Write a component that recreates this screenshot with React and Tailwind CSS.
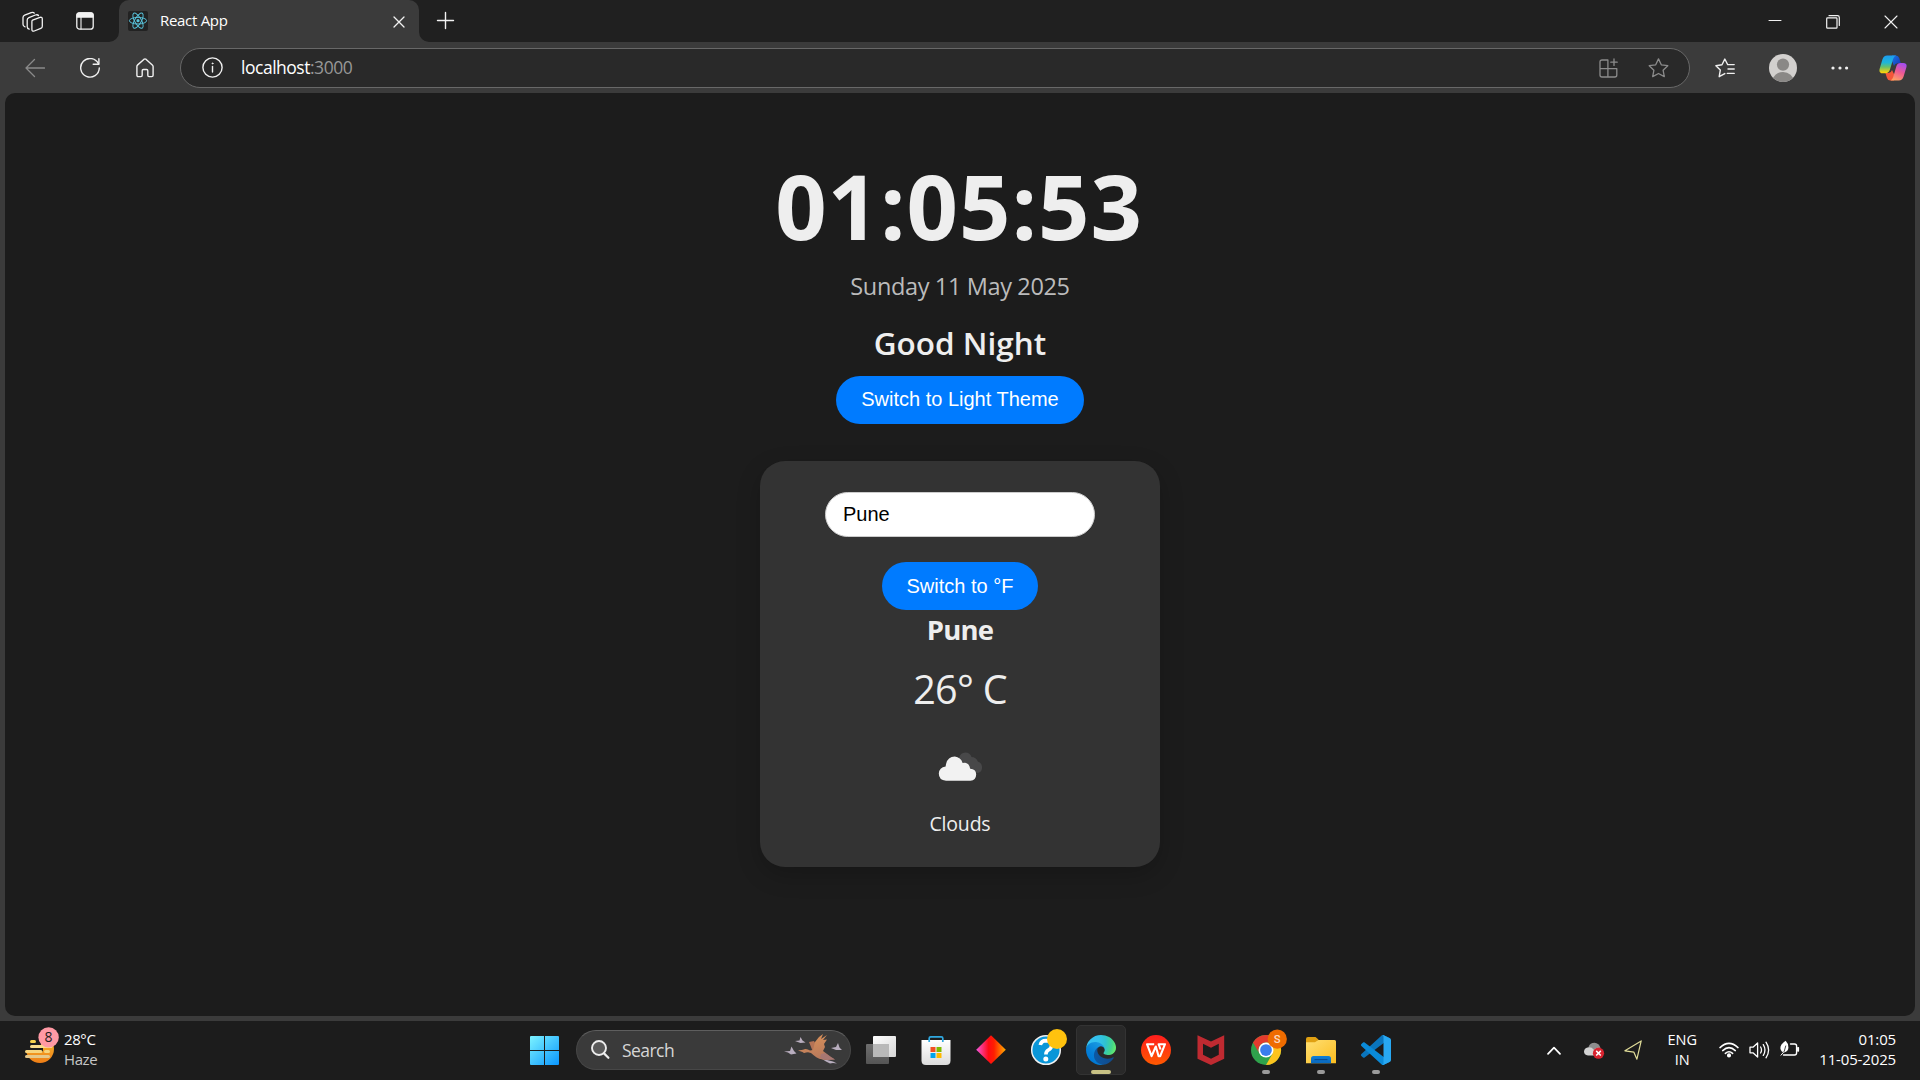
import React from "react";

const UI = "font-['Open_Sans','Noto_Sans',sans-serif]";
const ARIAL = "font-['Liberation_Sans',Arial,sans-serif]";

function Line({ className, children, w = 20, h = 20, sw = 1.3 }) {
  return (
    <svg
      className={`block shrink-0 ${className}`}
      width={w}
      height={h}
      viewBox={`0 0 ${w} ${h}`}
      fill="none"
      stroke="currentColor"
      strokeWidth={sw}
      strokeLinecap="round"
      strokeLinejoin="round"
    >
      {children}
    </svg>
  );
}

function ReactLogo() {
  return (
    <svg className="block h-5 w-5 shrink-0 rounded-[2px] bg-[#222222]" viewBox="0 0 20 20" fill="none" stroke="#58c4dc" strokeWidth="0.95">
      <ellipse cx="10" cy="9.7" rx="8.6" ry="3.3" />
      <ellipse cx="10" cy="9.7" rx="8.6" ry="3.3" transform="rotate(60 10 9.7)" />
      <ellipse cx="10" cy="9.7" rx="8.6" ry="3.3" transform="rotate(120 10 9.7)" />
      <circle cx="10" cy="9.7" r="1.6" fill="#58c4dc" stroke="none" />
    </svg>
  );
}

function TabStrip() {
  return (
    <div className="flex h-[42px] shrink-0 items-start bg-[#202020] text-[#f2f2f2]">
      <Line className="ml-[22px] mt-[11px]" w={22} h={22}>
        <path d="M10.6 9.2 L18 6.4 Q20.3 5.8 20.3 8 V15.2 Q20.3 16.8 18.8 17.4 L12.3 20 Q9.9 20.7 9.9 18.4 V10.6 Q9.9 9.5 10.6 9.2Z" />
        <path d="M7.2 18.2 Q5.2 17.8 5.2 15.6 V9 Q5.2 7.3 6.9 6.6 L13.4 4 Q15.6 3.3 16.5 4.5" />
        <path d="M3 15.8 Q1 15.4 1 13.2 V6.6 Q1 4.9 2.7 4.2 L9.2 1.6 Q11.4 0.9 12.3 2.1" />
      </Line>
      <Line className="ml-[32px] mt-[12px]" w={18} h={18}>
        <rect x="0.8" y="0.8" width="16.4" height="16.4" rx="2.8" />
        <path d="M1 5 V3 Q1 1 3 1 H15 Q17 1 17 3 V5Z" fill="currentColor" />
        <path d="M5 5 V17" strokeWidth="1.1" />
      </Line>
      <div className="relative ml-[25px] flex h-[42px] w-[300px] items-start rounded-t-[10px] bg-[#3b3b3b]">
        <svg className="absolute -left-[10px] bottom-0 h-[10px] w-[10px]" viewBox="0 0 10 10" fill="#3b3b3b">
          <path d="M10 0 A10 10 0 0 1 0 10 H10Z" />
        </svg>
        <svg className="absolute -right-[10px] bottom-0 h-[10px] w-[10px]" viewBox="0 0 10 10" fill="#3b3b3b">
          <path d="M0 0 A10 10 0 0 0 10 10 H0Z" />
        </svg>
        <div className="ml-[9px] mt-[11px]"><ReactLogo /></div>
        <span className="ml-[12px] mt-[10px] text-[15px] leading-[21px] tracking-[-0.3px] text-white">React App</span>
        <Line className="ml-auto mr-[14px] mt-[16px]" w={12} h={12}>
          <path d="M1 1 L11 11 M11 1 L1 11" />
        </Line>
      </div>
      <Line className="ml-[17px] mt-[11px]" w={19} h={19} sw={1.4}>
        <path d="M9.5 1.5 V17.5 M1.5 9.5 H17.5" />
      </Line>
      <div className="ml-auto flex items-start">
        <Line className="mr-[44px] mt-[14px]" w={14} h={14} sw={1}>
          <path d="M1 6.5 H13" />
        </Line>
        <Line className="mr-[44px] mt-[15px]" w={14} h={14} sw={1.2}>
          <rect x="0.7" y="2.9" width="10.3" height="10.3" rx="0.8" />
          <path d="M3 0.7 H11.5 Q13.3 0.7 13.3 2.5 V10.5" />
        </Line>
        <Line className="mr-[22px] mt-[15px]" w={14} h={14} sw={1.1}>
          <path d="M1 1 L13 13 M13 1 L1 13" />
        </Line>
      </div>
    </div>
  );
}

function Copilot() {
  return (
    <svg className="ml-[30px] block shrink-0" width="28" height="26" viewBox="0 0 28 26">
      <defs>
        <linearGradient id="cpA" x1="0" y1="0" x2="0" y2="1">
          <stop offset="0" stopColor="#1c9cf0" />
          <stop offset="0.4" stopColor="#1eb6d8" />
          <stop offset="0.65" stopColor="#68c06a" />
          <stop offset="0.95" stopColor="#f6d20e" />
        </linearGradient>
        <linearGradient id="cpB" x1="0.7" y1="0" x2="0.3" y2="1">
          <stop offset="0" stopColor="#a44df0" />
          <stop offset="0.5" stopColor="#ef5a92" />
          <stop offset="1" stopColor="#ffa264" />
        </linearGradient>
        <linearGradient id="cpC" x1="0" y1="0" x2="1" y2="1">
          <stop offset="0" stopColor="#1b73e0" />
          <stop offset="1" stopColor="#1636b8" />
        </linearGradient>
      </defs>
      <path d="M13 0.5 H16.8 Q19.4 0.5 20.2 3 L21.8 8.3 H18.5 Q16 8.3 15 11 L13 6Z" fill="url(#cpC)" />
      <path d="M15 25.5 H11.4 Q8.8 25.5 8 23 L6.4 18 H9.6 Q12 18 13 15 L15.5 20Z" fill="#f4573a" />
      <path d="M8.2 0.5 H17.2 Q15 1 14.1 4 L11 14.6 Q9.9 18.2 6.5 18.2 H3.8 Q-0.3 18.2 0.6 14 L3.4 4.5 Q4.6 0.5 8.2 0.5Z" fill="url(#cpA)" />
      <path d="M19.8 25.5 H11.5 Q13.4 24.8 14.2 22 L17.3 11.4 Q18.3 8 21.6 8 H24.2 Q28.4 8 27.4 12.2 L24.6 21.6 Q23.4 25.5 19.8 25.5Z" fill="url(#cpB)" />
    </svg>
  );
}

function Toolbar() {
  return (
    <div className="flex h-[51px] shrink-0 items-center bg-[#3b3b3b] text-[#f0f0f0]">
      <Line className="ml-[25px] text-[#8a8a8a]" w={20} h={20}>
        <path d="M1 10 H19.5 M9.5 1.5 L1 10 L9.5 18.5" />
      </Line>
      <Line className="ml-[35px]" w={20} h={20} sw={1.4}>
        <path d="M18.5 6 A9.3 9.3 0 1 0 19.3 10" />
        <path d="M18.9 0.8 V6.2 H13.2" />
      </Line>
      <Line className="ml-[36px]" w={18} h={20} sw={1.4}>
        <path d="M0.9 8.6 Q0.9 7.6 1.7 6.9 L7.8 1.4 Q9 0.4 10.2 1.4 L16.3 6.9 Q17.1 7.6 17.1 8.6 V17.3 Q17.1 18.6 15.8 18.6 H13 Q11.8 18.6 11.8 17.3 V12.7 Q11.8 11.5 10.6 11.5 H7.4 Q6.2 11.5 6.2 12.7 V17.3 Q6.2 18.6 5 18.6 H2.2 Q0.9 18.6 0.9 17.3Z" />
      </Line>
      <div className="ml-[26px] flex h-10 w-[1510px] items-center rounded-full border border-[#686868] bg-[#292929]">
        <Line className="ml-[21px]" w={21} h={21} sw={1.4}>
          <circle cx="10.5" cy="10.5" r="9.6" />
          <path d="M10.5 9.4 V15" />
          <circle cx="10.5" cy="6.4" r="0.5" fill="currentColor" strokeWidth="0.9" />
        </Line>
        <span className="mb-[2px] ml-[18px] text-[17.5px] leading-6 tracking-[-0.48px] text-white">
          localhost<span className="text-[#979797]">:3000</span>
        </span>
        <Line className="ml-auto text-[#8b8b8b]" w={20} h={20}>
          <path d="M8.9 2 H3 Q1 2 1 4 V17 Q1 19 3 19 H15.8 Q17.8 19 17.8 17 V10.6 H1 M8.9 2 V19" />
          <path d="M15 1 V7.4 M11.8 4.2 H18.2" />
        </Line>
        <Line className="ml-[29px] mr-[20px] text-[#8b8b8b]" w={21} h={20}>
          <path d="M10.5 0.9 L13.3 6.8 L19.8 7.7 L15.1 12.2 L16.3 18.6 L10.5 15.5 L4.7 18.6 L5.9 12.2 L1.2 7.7 L7.7 6.8Z" />
        </Line>
      </div>
      <Line className="ml-[25px]" w={20} h={20} sw={1.4}>
        <path d="M12.6 6.5 L9.8 1 L7 6.8 L0.9 7.7 L5.3 12.1 L4.2 18.7 L9.8 15.6" />
        <path d="M12.8 6.6 H19.2 M13 11 H19.2 M12.3 15.4 H19.2" />
      </Line>
      <svg className="ml-[34px] block shrink-0" width="28" height="28" viewBox="0 0 28 28">
        <defs><clipPath id="avatar"><circle cx="14" cy="14" r="14" /></clipPath></defs>
        <g clipPath="url(#avatar)">
          <rect width="28" height="28" fill="#d2d0ce" />
          <circle cx="14" cy="10.6" r="6.1" fill="#8a8886" />
          <ellipse cx="14" cy="27" rx="10.6" ry="9" fill="#8a8886" />
        </g>
      </svg>
      <svg className="ml-[34px] block shrink-0" width="18" height="4" viewBox="0 0 18 4" fill="#f0f0f0">
        <circle cx="2" cy="2" r="1.6" /><circle cx="9" cy="2" r="1.6" /><circle cx="15.6" cy="2" r="1.6" />
      </svg>
      <Copilot />
    </div>
  );
}

function CloudIcon() {
  return (
    <svg className="block" width="100" height="100" viewBox="0 0 100 100">
      <path d="M49 45 Q50 40 55.5 39.6 Q60 39.8 61.5 44 Q66 44 67.8 48.5 Q72.5 50 72 55.5 Q71.5 59 68 60 L54 56Z" fill="#484849" />
      <path d="M36 67.8 Q28.8 67.2 28.8 60.5 Q29.2 54.6 35.6 53.6 Q36.6 43.8 44.8 43.6 Q50.8 44.2 52.6 50 Q59 48.6 60.2 55.8 Q66 56 66.2 61.5 Q66 67.2 60.4 67.8Z" fill="#f2f2f2" />
    </svg>
  );
}

function Page() {
  return (
    <main className="mx-[5px] flex h-[923px] flex-col items-center overflow-hidden rounded-[10px] bg-[#1c1c1c] text-[#eeeeee]">
      <h1 className="mr-[2px] mt-[52px] text-[90px] font-bold leading-[120px] tracking-[0.95px]">01:05:53</h1>
      <p className="mt-[5px] text-[23.5px] leading-8 tracking-[-0.36px] text-[#bbbbbb]">Sunday 11 May 2025</p>
      <h2 className="mt-[19px] text-[31.5px] font-semibold leading-[44px]">Good Night</h2>
      <button className={`mt-[11px] h-12 rounded-[25px] bg-[#007bff] px-[25px] pb-[2px] text-[20px] text-white ${ARIAL}`}>
        Switch to Light Theme
      </button>
      <section className="mt-[37px] flex h-[406px] w-[400px] flex-col items-center rounded-[25px] bg-[#333333] shadow-[0_8px_24px_rgba(0,0,0,0.2)]">
        <input
          className={`mt-[31px] h-[45px] w-[270px] rounded-[25px] border border-[#cccccc] bg-white px-[17px] text-[20px] text-black outline-none ${ARIAL}`}
          defaultValue="Pune"
        />
        <button className={`mt-[25px] h-12 w-[156px] rounded-[25px] bg-[#007bff] text-[20px] text-white ${ARIAL}`}>
          Switch to °F
        </button>
        <h3 className="mt-px text-[27.5px] font-bold leading-[38px] tracking-[-0.75px]">Pune</h3>
        <p className="mt-[14px] text-[39.5px] leading-[52px] tracking-[-0.7px]">26° C</p>
        <div className="mt-[-2px] h-[100px]"><CloudIcon /></div>
        <p className="mt-[-2px] text-[19.5px] leading-[26px] tracking-[-0.2px]">Clouds</p>
      </section>
    </main>
  );
}

function HazeIcon() {
  return (
    <svg className="block shrink-0" width="36" height="38" viewBox="0 0 36 38">
      <defs>
        <linearGradient id="sun" x1="0" y1="0" x2="0" y2="1">
          <stop offset="0" stopColor="#f8c433" /><stop offset="1" stopColor="#ee7d16" />
        </linearGradient>
      </defs>
      <circle cx="15" cy="22" r="14" fill="url(#sun)" />
      <path d="M0 6 H16 V19 H18 V24.5 H0Z" fill="#1c1c1c" />
      <g strokeLinecap="round" strokeWidth="3">
        <path d="M6.5 14.5 H9.5" stroke="#f6d24e" />
        <path d="M6.5 19.5 H26" stroke="#f9dc8a" />
        <path d="M1.5 24.5 H16 M20.5 24.5 H23.5" stroke="#f7d57e" />
        <path d="M1.5 29.5 H23.5" stroke="#e6c88a" />
      </g>
      <circle cx="23.6" cy="10.4" r="10.2" fill="#ff99a4" />
      <text x="23.6" y="15.4" textAnchor="middle" fontSize="14" fill="#1c1c1c" className="font-['Open_Sans']">8</text>
    </svg>
  );
}

function SearchBirds() {
  return (
    <svg className="ml-auto mr-[7px] block" width="60" height="38" viewBox="0 0 60 38">
      <defs>
        <linearGradient id="wing" x1="0" y1="0" x2="0.3" y2="1">
          <stop offset="0" stopColor="#dd9358" /><stop offset="1" stopColor="#b97a5c" />
        </linearGradient>
      </defs>
      <g fill="#b9aebf">
        <path d="M1 20.5 L7 20 L8.5 15.5 L11 20 L13.5 22.5 L8 23.5 L5 21.5Z" />
        <path d="M12 10 L16.5 9.5 L17.5 6 L19.5 9.5 L22.5 11.5 L17.5 12Z" />
        <path d="M48 17 L53 16 L55 12 L56.5 16.5 L59 19 L53 19Z" />
        <path d="M39 28 L44 29 L50 30.5 L54 32.5 L50 32 L47 32.5 L43 30.5Z" />
      </g>
      <path d="M26 11 L31 10 L35 17 L30 21Z" fill="#b57355" />
      <path d="M30 19 L32 11 L36 6 L40 3 L38 8 L44 4 L40 9 L44 8.5 L41 13 L42 16 L40 20 L48 26 L52 28.5 L44 29 Q35 28.5 31 24.5 Q27 20 23 21.5 Q21 22.5 19.5 21 L15 19.5 L20 18.8 Q23 16.8 27 19.5Z" fill="url(#wing)" />
      <path d="M38 23 L42 22 L48 26 L52 28.5 L44 29 L37 27Z" fill="#9b7480" opacity="0.6" />
    </svg>
  );
}

function AppCell({ children, active, running }) {
  return (
    <div className="flex h-[58px] w-[55px] shrink-0 items-center justify-center">
      <div
        className={
          active
            ? "relative flex h-[50px] w-[50px] items-center justify-center rounded-[5px] border border-[#333333] bg-[#292929]"
            : "relative flex h-[50px] w-[50px] items-center justify-center"
        }
      >
        {children}
        {active && <span className="absolute bottom-0 left-1/2 h-1 w-5 -translate-x-1/2 rounded-full bg-[#c8c184]" />}
        {running && <span className="absolute bottom-px left-1/2 h-1 w-2 -translate-x-1/2 rounded-full bg-[#9a9a9a]" />}
      </div>
    </div>
  );
}

function Icon({ children, vb = "0 0 30 30" }) {
  return (
    <svg className="block h-[30px] w-[30px] overflow-visible" viewBox={vb}>
      {children}
    </svg>
  );
}

function Apps() {
  return (
    <div className="flex">
      <AppCell>
        <Icon>
          <defs>
            <linearGradient id="tvA" x1="0" y1="0" x2="1" y2="1"><stop offset="0" stopColor="#fff" /><stop offset="1" stopColor="#d6d6d6" /></linearGradient>
            <linearGradient id="tvB" x1="0" y1="0" x2="0" y2="1"><stop offset="0" stopColor="#6e6e6e" /><stop offset="1" stopColor="#555" /></linearGradient>
          </defs>
          <rect x="0" y="9" width="23" height="20" rx="1" fill="url(#tvB)" />
          <rect x="7" y="1" width="23" height="21" rx="1" fill="url(#tvA)" />
          <rect x="7" y="9" width="16" height="13" fill="#b9b9b9" />
        </Icon>
      </AppCell>
      <AppCell>
        <Icon>
          <defs><linearGradient id="bag" x1="0" y1="0" x2="0" y2="1"><stop offset="0" stopColor="#fff" /><stop offset="1" stopColor="#dcdcdc" /></linearGradient></defs>
          <path d="M8.2 7 V3.3 Q8.2 1.8 9.7 1.8 H20.3 Q21.8 1.8 21.8 3.3 V7" fill="none" stroke="#2fa8e0" strokeWidth="1.7" />
          <path d="M0.5 5 H29.5 V25.5 Q29.5 30 25 30 H5 Q0.5 30 0.5 25.5Z" fill="url(#bag)" />
          <path d="M8.2 5 V7 M21.8 5 V7" stroke="#2fa8e0" strokeWidth="1.7" />
          <rect x="9.5" y="12" width="5" height="5" fill="#f25022" />
          <rect x="15.5" y="12" width="5" height="5" fill="#7fba00" />
          <rect x="9.5" y="18" width="5" height="5" fill="#00a4ef" />
          <rect x="15.5" y="18" width="5" height="5" fill="#ffb900" />
        </Icon>
      </AppCell>
      <AppCell>
        <Icon>
          <defs>
            <linearGradient id="dia"><stop offset="0" stopColor="#f558e0" /><stop offset="0.42" stopColor="#ff0a14" /><stop offset="0.6" stopColor="#ff1e00" /><stop offset="1" stopColor="#ffb000" /></linearGradient>
          </defs>
          <path d="M15 0.3 L29.8 14.7 L15 29 L0.2 14.7Z" fill="url(#dia)" />
        </Icon>
      </AppCell>
      <AppCell>
        <Icon>
          <circle cx="15" cy="15" r="14.3" fill="#0a96d8" stroke="#f0f0f0" strokeWidth="1.5" />
          <path d="M9.3 10 Q10.2 5.6 15 5.6 Q20.6 5.8 20.6 10.6 Q20.4 13.4 17.4 15 Q14.9 16.4 14.9 19.4" fill="none" stroke="#fff" strokeWidth="3.6" />
          <circle cx="14.8" cy="24" r="2.5" fill="#fff" />
          <circle cx="26" cy="4" r="10" fill="#ffc20e" />
        </Icon>
      </AppCell>
      <AppCell active>
        <Icon vb="0 0 256 256">
          <defs>
            <linearGradient id="edA" x1="63" y1="177" x2="242" y2="177" gradientUnits="userSpaceOnUse"><stop offset="0" stopColor="#0c59a4" /><stop offset="1" stopColor="#114a8b" /></linearGradient>
            <linearGradient id="edB" x1="157" y1="100" x2="46" y2="221" gradientUnits="userSpaceOnUse"><stop offset="0" stopColor="#1b9de2" /><stop offset="0.16" stopColor="#1595df" /><stop offset="0.67" stopColor="#0680d7" /><stop offset="1" stopColor="#0078d4" /></linearGradient>
            <radialGradient id="edC" cx="30" cy="60" r="235" gradientUnits="userSpaceOnUse"><stop offset="0" stopColor="#35c1f1" /><stop offset="0.35" stopColor="#34c1ed" /><stop offset="0.6" stopColor="#2fc2cf" /><stop offset="0.85" stopColor="#43d58b" /><stop offset="1" stopColor="#66eb6e" /></radialGradient>
          </defs>
          <g transform="translate(-4.63 -4.92)">
            <path fill="url(#edA)" d="M235.68 195.46a93.73 93.73 0 0 1-10.54 4.71 101.87 101.87 0 0 1-35.9 6.46c-47.32 0-88.54-32.55-88.54-74.32A31.48 31.48 0 0 1 117.13 105c-42.8 1.8-53.8 46.4-53.8 72.53 0 73.88 68.09 81.37 82.76 81.37 7.91 0 19.84-2.3 27-4.56l1.31-.44a128.34 128.34 0 0 0 66.6-52.8 4 4 0 0 0-5.32-5.64z" />
            <path fill="url(#edB)" d="M110.34 246.34A79.2 79.2 0 0 1 87.6 225a80.72 80.72 0 0 1 29.53-120c3.12-1.47 8.45-4.13 15.54-4a32.35 32.35 0 0 1 25.69 13 31.88 31.88 0 0 1 6.36 18.66c0-.21 24.46-79.6-80-79.6-43.9 0-80 41.66-80 78.21a130.15 130.15 0 0 0 12.11 56 128 128 0 0 0 156.38 67.11 75.55 75.55 0 0 1-62.78-8z" />
            <path fill="url(#edC)" d="M156.94 153.78c-.81 1.05-3.3 2.5-3.3 5.66 0 2.61 1.7 5.12 4.72 7.23 14.38 10 41.49 8.68 41.56 8.68a59.56 59.56 0 0 0 30.27-8.35 61.38 61.38 0 0 0 30.43-52.88c.26-22.41-8-37.31-11.34-43.91C228.09 28.76 182.35 4.92 132.61 4.92a128 128 0 0 0-128 126.2c.48-36.54 36.8-66.05 80-66.05 3.5 0 23.46.34 42 10.07 16.34 8.58 24.9 18.94 30.85 29.21 6.18 10.67 7.28 24.15 7.28 29.52s-2.74 13.33-7.8 19.91z" />
          </g>
        </Icon>
      </AppCell>
      <AppCell>
        <Icon>
          <defs><linearGradient id="wps" x1="0" y1="0" x2="0" y2="1"><stop offset="0" stopColor="#ff1d1d" /><stop offset="1" stopColor="#ff5a00" /></linearGradient></defs>
          <circle cx="15" cy="15" r="15" fill="url(#wps)" />
          <path d="M13.2 9.2 H6 L10.6 21.2 L14.8 11.5 L17.6 21.2 H19.2 L24 9.2 H17.6 L19.6 14.5" fill="none" stroke="#fff" strokeWidth="2.1" strokeLinejoin="round" />
        </Icon>
      </AppCell>
      <AppCell>
        <Icon>
          <path d="M1.5 0.2 L15 6.6 L28.2 0.2 V23.8 L15 30 L1.5 23.8Z M7 8.8 V19.8 L15 23.8 L22.8 19.8 V8.8 L15 12.8Z" fill="#bf2a31" fillRule="evenodd" />
        </Icon>
      </AppCell>
      <AppCell running>
        <Icon vb="0 0 48 48">
          <circle cx="24" cy="24" r="24" fill="#2fa24c" />
          <path d="M24 12 H44.8 A24 24 0 0 1 24 48 L34.4 30Z" fill="#fcc31e" />
          <path d="M3.2 12 A24 24 0 0 1 44.8 12 H24 A12 12 0 0 0 13.6 30Z" fill="#e33b2e" />
          <circle cx="24" cy="24" r="12" fill="#fff" />
          <circle cx="24" cy="24" r="9.4" fill="#3b7ded" />
          <circle cx="42" cy="6.4" r="15.4" fill="#ef6c00" />
          <text x="42" y="13" textAnchor="middle" fontSize="18" fontWeight="500" fill="#fbdcc4" className="font-['Roboto']">S</text>
        </Icon>
      </AppCell>
      <AppCell running>
        <Icon>
          <defs>
            <linearGradient id="fold" x1="0" y1="0" x2="1" y2="1"><stop offset="0" stopColor="#ffdf73" /><stop offset="1" stopColor="#fbbd1f" /></linearGradient>
            <linearGradient id="tray" x1="0" y1="0" x2="0" y2="1"><stop offset="0" stopColor="#0f7fd8" /><stop offset="1" stopColor="#0a68bd" /></linearGradient>
          </defs>
          <path d="M0 4 Q0 2 2 2 H9.5 L12.5 4.5 L10 9 H0Z" fill="#e0a012" />
          <path d="M0 7.2 H9 L12.3 5 H28.5 Q30 5 30 6.5 V28.2 H0Z" fill="url(#fold)" />
          <path d="M5 28.2 V23.5 Q5 21 7.5 21 H22.5 Q25 21 25 23.5 V28.2Z" fill="url(#tray)" />
          <path d="M8.5 24.6 H21.5" stroke="#084a94" strokeWidth="1.1" />
        </Icon>
      </AppCell>
      <AppCell running>
        <Icon vb="0 0 100 100">
          <path fill="#0a75bd" d="M96.4614 10.7962L75.8569 0.875542C73.4719 -0.272773 70.6217 0.211611 68.75 2.08333L1.29858 63.5832C-0.515693 65.2373 -0.513607 68.0937 1.30308 69.7452L6.81272 74.754C8.29793 76.1042 10.5347 76.2036 12.1338 74.9905L93.3609 13.3699C96.086 11.3026 100 13.2462 100 16.6667V16.4275C100 14.0265 98.6246 11.8378 96.4614 10.7962Z" />
          <path fill="#0a8ad8" d="M96.4614 89.2038L75.8569 99.1245C73.4719 100.273 70.6217 99.7884 68.75 97.9167L1.29858 36.4169C-0.515693 34.7627 -0.513607 31.9063 1.30308 30.2548L6.81272 25.246C8.29793 23.8958 10.5347 23.7964 12.1338 25.0095L93.3609 86.6301C96.086 88.6974 100 86.7538 100 83.3334V83.5726C100 85.9735 98.6246 88.1622 96.4614 89.2038Z" />
          <path fill="#28a8f2" d="M75.8578 99.1263C73.4721 100.274 70.6219 99.7885 68.75 97.9166C71.0564 100.223 75 98.5895 75 95.3278V4.67213C75 1.41039 71.0564 -0.223106 68.75 2.08329C70.6219 0.211402 73.4721 -0.273666 75.8578 0.873633L96.4587 10.7807C98.6234 11.8217 100 14.0112 100 16.4132V83.5871C100 85.9891 98.6234 88.1786 96.4586 89.2196L75.8578 99.1263Z" />
        </Icon>
      </AppCell>
    </div>
  );
}

function Tray() {
  return (
    <div className="ml-auto mr-px flex items-center text-white">
      <Line w={14} h={9} sw={1.7} className="">
        <path d="M1 7.8 L7 1.6 L13 7.8" />
      </Line>
      <svg className="ml-[23px] mt-[2px] block" width="21" height="18" viewBox="0 0 21 18">
        <path d="M4.5 5 Q6 0.8 10.5 0.8 Q15 1 16.5 6 L10 10Z" fill="#8d8d8d" />
        <path d="M4 13.5 Q0 13 0 9.5 Q0.4 5.6 4.6 5.2 Q8 5 9.5 7.5 L14 5.5 Q17 6 17 9 L12 13.5Z" fill="#d2d2d2" />
        <circle cx="14.5" cy="11.2" r="5.6" fill="#d8232f" />
        <path d="M12.2 8.9 L16.8 13.5 M16.8 8.9 L12.2 13.5" stroke="#fff" strokeWidth="1.5" />
      </svg>
      <Line w={18} h={20} sw={1.2} className="ml-[19px]  text-[#e0dc98]">
        <path d="M17.2 0.9 L0.9 10.8 L9.9 12.2 L12.9 19.2Z" />
      </Line>
      <div className="ml-[21px] w-[38px] text-center text-[14.5px] leading-5 tracking-[-0.1px]">ENG<br />IN</div>
      <Line w={20} h={16} sw={1.5} className="ml-[18px]">
        <path d="M1 5.6 Q10 -2.8 19 5.6 M3.7 8.6 Q10 2.6 16.3 8.6 M6.4 11.4 Q10 8 13.6 11.4" />
        <circle cx="10" cy="13.4" r="1.3" fill="currentColor" />
      </Line>
      <Line w={21} h={18} sw={1.3} className="ml-[10px]">
        <path d="M1 6.2 H4 L8.6 2 V16 L4 11.8 H1Z" />
        <path d="M11.6 6 Q13.4 9 11.6 12 M14.3 3.6 Q17.6 9 14.3 14.4 M17 1.2 Q22.2 9 17 16.8" />
      </Line>
      <Line w={21} h={18} sw={1.4} className="mb-[2px] ml-[9px]">
        <path d="M11.5 4 H15.5 Q17.6 4 17.6 6 V12.8 Q17.6 15 15.5 15 H4.5" />
        <path d="M18.8 7.8 H19.4 V11 H18.8Z" fill="currentColor" />
        <path d="M6.6 0.8 Q1 4.6 1.4 8.6 Q2 12 5 12.4 Q9.4 11.4 9.4 7.4 Q9.4 3.4 6.6 0.8Z" fill="currentColor" stroke="none" />
        <path d="M6.8 6 Q6.4 11.5 1.8 15.6" stroke="#1c1c1c" strokeWidth="0.8" />
        <path d="M4.4 12.4 L2 15.2" strokeWidth="1" />
      </Line>
      <div className="mb-[3px] ml-[19px] mr-[23px] text-right text-[15px] leading-5 tracking-[-0.15px]">01:05<br />11-05-2025</div>
    </div>
  );
}

function Taskbar() {
  return (
    <div className="grid h-[59px] shrink-0 grid-cols-[530px_874px_516px] items-center bg-[#1c1c1c] pb-px">
      <div className="flex items-center">
        <div className="mb-[8px] ml-[25px]"><HazeIcon /></div>
        <div className="mb-[3px] ml-[3px] text-[15px] leading-5 tracking-[-0.4px] text-white">
          28°C<br /><span className="text-[#c6c6c6]">Haze</span>
        </div>
      </div>
      <div className="flex items-center">
        <svg className="block shrink-0" width="29" height="29" viewBox="0 0 29 29">
          <defs><linearGradient id="win" x1="0" y1="0" x2="1" y2="1"><stop offset="0" stopColor="#7cf3ff" /><stop offset="1" stopColor="#0a96ff" /></linearGradient></defs>
          <path d="M1 0 H14 V14 H0 V1Q0 0 1 0Z M15 0 H28 Q29 0 29 1 V14 H15Z M0 15 H14 V29 H1 Q0 29 0 28Z M15 15 H29 V28 Q29 29 28 29 H15Z" fill="url(#win)" />
        </svg>
        <div className="ml-[17px] mr-[2.5px] flex h-10 w-[275px] shrink-0 items-center rounded-full border border-[#474747] border-t-[#5e5e5e] bg-[#3a3a3a]">
          <svg className="ml-[14px] block" width="19" height="20" viewBox="0 0 19 20" fill="none">
            <circle cx="8" cy="8" r="7" stroke="#ededed" strokeWidth="1.9" fill="#5a5a5a" />
            <path d="M13 13.4 L17.4 17.8" stroke="#ededed" strokeWidth="2.2" strokeLinecap="round" />
          </svg>
          <span className="ml-[12px] text-[17.5px] leading-6 tracking-[-0.55px] text-[#d6d6d6]">Search</span>
          <SearchBirds />
        </div>
        <Apps />
      </div>
      <Tray />
    </div>
  );
}

export default function App() {
  return (
    <div className={`flex h-[1080px] w-[1920px] flex-col overflow-hidden bg-[#3b3b3b] ${UI}`}>
      <TabStrip />
      <Toolbar />
      <Page />
      <div className="h-[5px] shrink-0" />
      <Taskbar />
    </div>
  );
}
